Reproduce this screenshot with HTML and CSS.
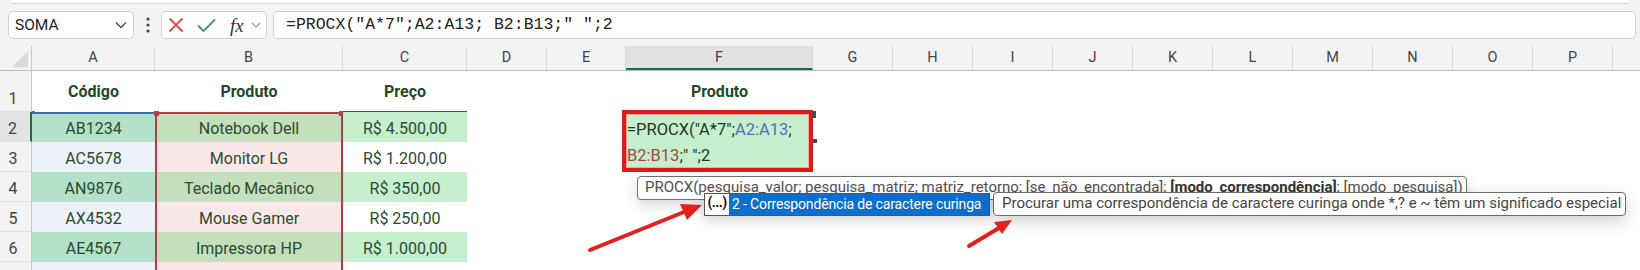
FILE: index.html
```html
<!DOCTYPE html>
<html lang="pt-BR">
<head>
<meta charset="utf-8">
<title>PROCX – caractere curinga</title>
<link rel="stylesheet" href="styles.css">
</head>
<body>
<div class="app">
  <div class="ribbon-edge"></div>
  <div class="fbar">
    <div class="namebox">
      <span class="nb-text">SOMA</span>
      <svg class="nb-chev" width="12" height="8" viewBox="0 0 12 8"><path d="M1 1.5 L6 6.5 L11 1.5" fill="none" stroke="#444" stroke-width="1.3"/></svg>
    </div>
    <div class="fdots">
      <svg width="4" height="16" viewBox="0 0 4 16"><circle cx="2" cy="2" r="1.6" fill="#444"/><circle cx="2" cy="8" r="1.6" fill="#444"/><circle cx="2" cy="14" r="1.6" fill="#444"/></svg>
    </div>
    <div class="fxbox">
      <svg class="ic-x" width="16" height="16" viewBox="0 0 16 16"><path d="M1.5 1.5 L14.5 14.5 M14.5 1.5 L1.5 14.5" stroke="#d9484c" stroke-width="1.8" fill="none"/></svg>
      <svg class="ic-ok" width="19" height="15" viewBox="0 0 19 15"><path d="M1 7.5 L6.5 13 L18 1.5" stroke="#3f9c5a" stroke-width="1.8" fill="none"/></svg>
      <span class="fx">fx</span>
      <svg class="ic-chev" width="10" height="6" viewBox="0 0 10 6"><path d="M1 1 L5 5 L9 1" fill="none" stroke="#999" stroke-width="1.1"/></svg>
    </div>
    <div class="finput">=PROCX("A*7";A2:A13; B2:B13;" ";2</div>
  </div>

  <div class="sheet">
    <div class="row hdr">
      <div class="rh corner"><svg width="16" height="16" viewBox="0 0 16 16"><path d="M16 0 L16 16 L0 16 Z" fill="#d9d9d9"/></svg></div>
      <div class="ch a">A</div>
      <div class="ch b">B</div>
      <div class="ch c">C</div>
      <div class="ch d">D</div>
      <div class="ch e">E</div>
      <div class="ch f active">F</div>
      <div class="ch g">G</div>
      <div class="ch g">H</div>
      <div class="ch g">I</div>
      <div class="ch g">J</div>
      <div class="ch g">K</div>
      <div class="ch g">L</div>
      <div class="ch g">M</div>
      <div class="ch g">N</div>
      <div class="ch g">O</div>
      <div class="ch g">P</div>
      <div class="ch rest"></div>
    </div>

    <div class="row r1">
      <div class="rh">1</div>
      <div class="cell a th">Código</div>
      <div class="cell b th">Produto</div>
      <div class="cell c th line">Preço</div>
      <div class="cell d"></div>
      <div class="cell e"></div>
      <div class="cell f th">Produto</div>
      <div class="cell rest"></div>
    </div>

    <div class="row dr">
      <div class="rh active">2</div>
      <div class="cell a band top-blue">AB1234<span class="hd hd-blue"></span></div>
      <div class="cell b band top-red">Notebook Dell<span class="hd hd-red-l"></span><span class="hd hd-red-r"></span></div>
      <div class="cell c band">R$ 4.500,00</div>
      <div class="cell d"></div>
      <div class="cell e"></div>
      <div class="cell f">
        <div class="editor">
          <span class="tk">=PROCX("A*7";</span><span class="tk-a">A2:A13</span><span class="tk">;</span><br><span class="tk-b">B2:B13</span><span class="tk">;" ";2</span>
        </div>
        <span class="sel-mark"></span>
        <span class="sel-handle"></span>
      </div>
      <div class="cell rest"></div>
    </div>

    <div class="row dr">
      <div class="rh">3</div>
      <div class="cell a">AC5678</div>
      <div class="cell b">Monitor LG</div>
      <div class="cell c">R$ 1.200,00</div>
      <div class="cell d"></div>
      <div class="cell e"></div>
      <div class="cell f"></div>
      <div class="cell rest"></div>
    </div>

    <div class="row dr">
      <div class="rh">4</div>
      <div class="cell a band">AN9876</div>
      <div class="cell b band">Teclado Mecânico</div>
      <div class="cell c band">R$ 350,00</div>
      <div class="cell d"></div>
      <div class="cell e"></div>
      <div class="cell f"></div>
      <div class="cell rest"></div>
    </div>

    <div class="row dr">
      <div class="rh">5</div>
      <div class="cell a">AX4532</div>
      <div class="cell b">Mouse Gamer</div>
      <div class="cell c">R$ 250,00</div>
      <div class="cell d"></div>
      <div class="cell e"></div>
      <div class="cell f"></div>
      <div class="cell rest"></div>
    </div>

    <div class="row dr">
      <div class="rh">6</div>
      <div class="cell a band">AE4567</div>
      <div class="cell b band">Impressora HP</div>
      <div class="cell c band">R$ 1.000,00</div>
      <div class="cell d"></div>
      <div class="cell e"></div>
      <div class="cell f"></div>
      <div class="cell rest"></div>
    </div>

    <div class="row dr">
      <div class="rh"></div>
      <div class="cell a"></div>
      <div class="cell b"></div>
      <div class="cell c"></div>
      <div class="cell d"></div>
      <div class="cell e"></div>
      <div class="cell f"></div>
      <div class="cell rest"></div>
    </div>
  </div>

  <div class="sig">PROCX(pesquisa_valor; pesquisa_matriz; matriz_retorno; [se_não_encontrada]; <b>[modo_correspondência]</b>; [modo_pesquisa])</div>
  <div class="dd">
    <div class="dd-ico">(...)</div>
    <div class="dd-item">2 - Correspondência de caractere curinga</div>
  </div>
  <div class="desc">Procurar uma correspondência de caractere curinga onde *,? e ~ têm um significado especial</div>

  <svg class="arrows" width="1640" height="270" viewBox="0 0 1640 270">
    <line x1="590" y1="250" x2="684" y2="212" stroke="#e3201c" stroke-width="4" stroke-linecap="round"/>
    <polygon points="702,205 687,220 680,204" fill="#e3201c"/>
    <line x1="969" y1="246" x2="999" y2="228" stroke="#e3201c" stroke-width="4" stroke-linecap="round"/>
    <polygon points="1012,220 1002,234 994,222" fill="#e3201c"/>
  </svg>
</div>
</body>
</html>
```
FILE: styles.css
```css
* { box-sizing: border-box; }
html, body { margin: 0; padding: 0; }
body {
  width: 1640px;
  height: 270px;
  overflow: hidden;
  background: #fff;
  font-family: Roboto, "Noto Sans", sans-serif;
}
.app {
  position: relative;
  width: 1640px;
  height: 270px;
  overflow: hidden;
  background: #f3f3f3;
}

/* ---------- formula bar ---------- */
.ribbon-edge {
  height: 4px;
  margin: 0 10px;
  background: #fff;
  border-bottom: 1px solid #d4d4d4;
  border-radius: 0 0 6px 6px;
}
.fbar {
  height: 42px;
  padding: 7px 4px 7px 8px;
  display: flex;
  align-items: center;
}
.namebox {
  width: 126px;
  height: 28px;
  background: #fff;
  border: 1px solid #d2d2d2;
  border-radius: 5px;
  display: flex;
  align-items: center;
  justify-content: space-between;
  padding: 0 6px 0 6px;
  font-size: 15.5px;
  color: #222;
}
.fdots {
  width: 27px;
  height: 28px;
  display: flex;
  align-items: center;
  justify-content: center;
}
.fxbox {
  width: 106px;
  height: 28px;
  background: #fff;
  border: 1px solid #d2d2d2;
  border-radius: 5px;
  display: flex;
  align-items: center;
  padding-left: 6px;
}
.ic-ok { margin-left: 13px; }
.fx {
  margin-left: 14px;
  font-family: "Liberation Serif", "DejaVu Serif", serif;
  font-style: italic;
  font-size: 19px;
  color: #333;
  line-height: 1;
}
.ic-chev { margin-left: 7px; }
.finput {
  flex: 1;
  height: 28px;
  margin-left: 6px;
  background: #fff;
  border: 1px solid #d2d2d2;
  border-radius: 5px;
  padding-left: 12px;
  font-family: "Liberation Mono", "DejaVu Sans Mono", monospace;
  font-size: 16.5px;
  line-height: 26px;
  color: #222;
  white-space: pre;
}

/* ---------- sheet ---------- */
.sheet { background: #fff; }
.row { display: flex; }
.hdr { height: 25px; background: #f3f3f3; border-bottom: 1px solid #bcbcbc; }
.r1 { height: 41px; }
.dr { height: 30px; }

.a { width: 123px; }
.b { width: 188px; }
.c { width: 124px; }
.d { width: 80px; }
.e { width: 79px; }
.f { width: 187px; }
.g { width: 80px; }
.rest { flex: 1; }

.rh {
  width: 32px;
  flex: none;
  background: #f3f3f3;
  border-right: 1px solid #c9c9c9;
  border-bottom: 1px solid #e0e0e0;
  display: flex;
  align-items: flex-end;
  justify-content: center;
  padding: 0 5px 3px 0;
  font-size: 16px;
  color: #444;
}
.rh.active {
  background: #e3e3e3;
  border-right: 2px solid #1f6b3f;
}
.corner {
  border-bottom: none;
  align-items: flex-end;
  justify-content: flex-end;
  padding: 0 3px 3px 0;
}
.ch {
  flex: none;
  border-right: 1px solid #d8d8d8;
  display: flex;
  align-items: flex-end;
  justify-content: center;
  padding-bottom: 4px;
  font-size: 14.5px;
  color: #444;
}
.ch.rest { flex: 1; border-right: none; }
.ch.active {
  background: #e1e1e1;
  border-bottom: 2px solid #1f6b3f;
  padding-bottom: 2px;
}

.cell {
  position: relative;
  flex: none;
  display: flex;
  align-items: center;
  justify-content: center;
  padding-top: 3px;
  font-size: 16px;
  color: #2b4a30;
  white-space: nowrap;
}
.cell.rest { flex: 1; }
.th {
  font-weight: 700;
  color: #1f4a26;
  padding-top: 0;
}
.th.line { border-bottom: 1px solid #2e6238; }

/* table fills (banded rows, tinted by the formula range colours) */
.dr .a { background: #edf1f9; }
.dr .a.band { background: #b4e1c9; }
.dr .b {
  background: #fae8e8;
  box-shadow: inset 2px 0 #b63d48, inset -2px 0 #b63d48;
}
.dr .b.band { background: #c4dfbc; }
.dr .c.band { background: #c6efce; }
.dr .a.top-blue { box-shadow: inset 0 2px #3d6cb5; }
.dr .b.top-red { box-shadow: inset 2px 0 #b63d48, inset -2px 0 #b63d48, inset 0 2px #b63d48; }

.hd {
  position: absolute;
  top: -1px;
  width: 5px;
  height: 5px;
}
.hd-blue { left: 0; width: 3px; height: 3px; background: #3d6cb5; }
.hd-red-l { left: -1px; background: #b63d48; }
.hd-red-r { right: -1px; background: #b63d48; }

/* cell in edit mode */
.editor {
  position: absolute;
  left: -4px;
  top: -2px;
  width: 191px;
  height: 62px;
  z-index: 2;
  background: #c6efce;
  border: 4px solid #de1a1a;
  box-shadow: inset 0 0 0 1px #f3a79e;
  padding: 3px 0 0 1px;
  font-size: 16.5px;
  line-height: 26px;
  text-align: left;
  white-space: nowrap;
  color: #1d3a21;
}
.tk-a { color: #4574bf; }
.tk-b { color: #a8463f; }
.sel-mark {
  position: absolute;
  right: -3px;
  top: -1px;
  width: 4px;
  height: 7px;
  background: #4a4a4a;
  z-index: 3;
}
.sel-handle {
  position: absolute;
  right: -4px;
  top: 27px;
  width: 4px;
  height: 4px;
  background: #4a4a4a;
  z-index: 3;
}

/* ---------- formula tooltips ---------- */
.sig {
  position: absolute;
  left: 637px;
  top: 176px;
  width: 830px;
  height: 24px;
  z-index: 4;
  background: #fff;
  border: 1px solid #707070;
  border-radius: 4px;
  box-shadow: 0 5px 14px rgba(0, 0, 0, 0.16);
  padding-left: 7px;
  font-size: 15px;
  line-height: 20px;
  color: #505050;
  white-space: nowrap;
  overflow: hidden;
}
.sig b { color: #333; }
.dd {
  position: absolute;
  left: 704px;
  top: 193px;
  width: 286px;
  height: 23px;
  z-index: 5;
  display: flex;
  background: #fff;
  border: 1px solid #555;
  box-shadow: 0 5px 14px rgba(0, 0, 0, 0.16);
}
.dd-ico {
  width: 24px;
  flex: none;
  font-family: Roboto, "Noto Sans", sans-serif;
  font-weight: 700;
  font-size: 14px;
  line-height: 17px;
  text-align: center;
  color: #111;
  letter-spacing: -0.6px;
}
.dd-item {
  flex: 1;
  background: #0b6fcf;
  color: #fff;
  font-size: 14px;
  letter-spacing: -0.15px;
  line-height: 21px;
  padding-left: 3px;
  white-space: nowrap;
  overflow: hidden;
}
.desc {
  position: absolute;
  left: 993px;
  top: 192px;
  width: 633px;
  height: 24px;
  z-index: 6;
  background: #fff;
  border: 1px solid #6b6b6b;
  border-radius: 4px;
  box-shadow: 0 6px 16px rgba(0, 0, 0, 0.18);
  padding-left: 8px;
  font-size: 15px;
  line-height: 21px;
  color: #444;
  white-space: nowrap;
  overflow: hidden;
}

.arrows {
  position: absolute;
  left: 0;
  top: 0;
  z-index: 7;
  pointer-events: none;
}
```
